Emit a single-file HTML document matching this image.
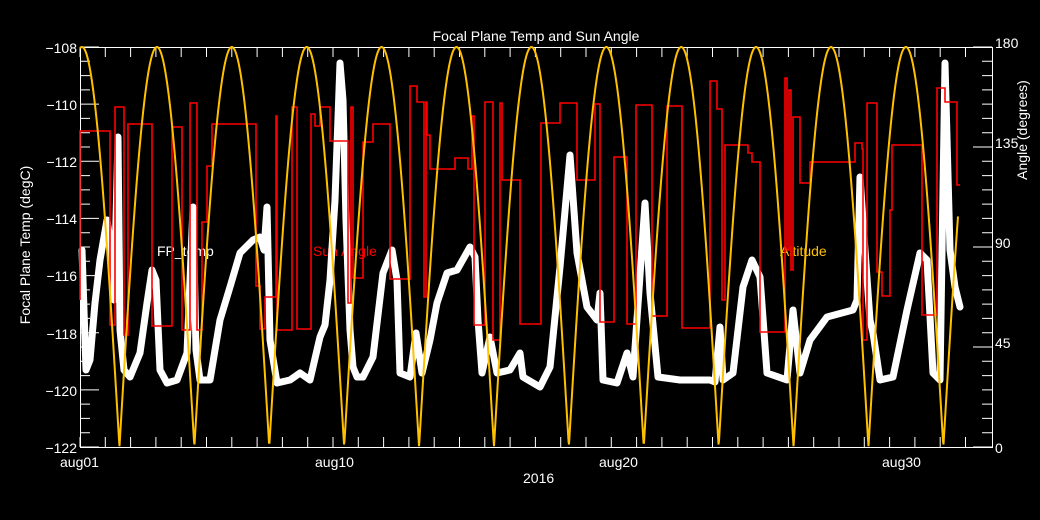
<!DOCTYPE html>
<html><head><meta charset="utf-8"><style>
html,body{margin:0;padding:0;background:#000;width:1040px;height:520px;overflow:hidden}
svg text{font-family:"Liberation Sans",sans-serif;font-size:14px}
</style></head><body>
<svg id="s" width="1040" height="520" viewBox="0 0 1040 520" xmlns="http://www.w3.org/2000/svg">
<rect width="1040" height="520" fill="#000"/>
<text x="536" y="41" fill="#fff" text-anchor="middle" font-size="15">Focal Plane Temp and Sun Angle</text>
<g fill="#fff" text-anchor="end">
<text x="77" y="53">−108</text><text x="77" y="110">−110</text><text x="77" y="167">−112</text>
<text x="77" y="224">−114</text><text x="77" y="281">−116</text><text x="77" y="339">−118</text>
<text x="77" y="396">−120</text><text x="77" y="453">−122</text>
</g>
<g fill="#fff">
<text x="995" y="48">180</text><text x="995" y="148">135</text><text x="995" y="248">90</text>
<text x="995" y="348">45</text><text x="995" y="453">0</text>
<text x="60" y="467">aug01</text><text x="315" y="467">aug10</text><text x="599" y="467">aug20</text><text x="882" y="467">aug30</text>
<text x="523" y="483">2016</text>
<text transform="translate(30,245) rotate(-90)" text-anchor="middle">Focal Plane Temp (degC)</text>
<text transform="translate(1027,130) rotate(-90)" text-anchor="middle">Angle (degrees)</text>
<text x="157" y="256">FP_temp</text>
</g>
<text x="313" y="256" fill="#ff0000">Sun Angle</text>
<text x="780" y="256" fill="#ffc000">Altitude</text>
<g id="ax" stroke="#fff" stroke-width="1" fill="none"><rect x="80.5" y="47.5" width="912" height="400"/></g>
<polyline fill="none" stroke="#fff" stroke-width="7" stroke-linejoin="round" stroke-linecap="round" points="82,250 86,370 90,360 95,303 100,260 107,220 110,240 114,300 118,137 120,330 124,370 130,377 140,353 147,303 152,270 156,280 160,370 167,383 177,380 187,353 193,207 196,350 200,380 210,380 220,320 230,287 240,253 253,240 260,237 264,250 267,207 270,340 277,383 290,380 300,373 310,380 320,337 325,325 330,280 335,200 340,63 343,100 346,220 350,330 353,367 357,377 363,377 373,357 383,273 392,250 397,280 400,373 410,377 416,333 422,373 430,340 437,303 447,273 457,270 470,247 475,257 478,320 482,373 490,337 497,373 510,370 520,353 523,377 540,387 550,367 560,267 570,155 577,253 587,307 597,320 600,293 603,380 617,383 627,353 633,377 645,203 650,293 658,377 680,380 710,380 715,382 720,327 723,380 733,373 743,287 752,260 760,277 767,373 787,380 793,310 800,373 810,340 827,317 853,310 857,300 860,177 865,250 870,320 873,333 880,380 893,377 907,310 920,253 927,260 933,373 940,380 945,63 950,250 955,287 960,307"/>
<path fill="none" stroke="#ff0000" stroke-width="1.6" d="M80 300 V131 H110 V325 H115 V107 H124 V335 H128 V124 H152 V326 H172 V127 H182 V330 H190 V103 H197 V330 H202 V222 H207 V166 H212 V124 H256 V286 H260 V329 H265 V297 H276 V116 H277 V330 H292 V107 H297 V329 H311 V114 H315 V126 H320 V107 H330 V141 H348 V303 H351 V107 H353 V278 H363 V142 H373 V124 H390 V279 H410 V86 H417 V102 H424 V297 H426 V102 H427 V135 H430 V169 H455 V158 H468 V169 H472 V116 H474 V325 H485 V102 H493 V340 H500 V103 H502 V180 H520 V324 H541 V123 H560 V103 H577 V180 H595 V104 H600 V322 H614 V157 H627 V324 H636 V105 H652 V316 H667 V106 H682 V328 H710 V81 H717 V109 H722 V300 H725 V145 H748 V153 H752 V162 H760 V332 H785 V78 H787 V250 H789 V90 H791 V270 H793 V117 H800 V183 H810 V162 H855 V143 H862 V149 H863 V340 H867 V103 H877 V272 H882 V296 H890 V210 H892 V145 H922 V315 H937 V88 H945 V102 H957 V185 H960"/>
<polyline id="alt" fill="none" stroke="#ffc000" stroke-width="2" points=""/>
</svg>
<script>
(function(){
var p=[];
for(var x=80;x<=958;x+=0.5){var a=180*Math.abs(Math.cos(Math.PI*(x-82)/74.9));p.push(x+","+(447-a/180*400).toFixed(1));}
document.getElementById("alt").setAttribute("points",p.join(" "));
var g=document.getElementById("ax"),d="";
for(var i=0;i<=35;i++){var x=80+i*25.3;if(x>992)break;d+="M"+x+" 447v-10M"+x+" 47v10";}
for(var j=0;j<=28;j++){var y=47+j*14.286,L=(j%4==0)?19:10,R=(j%7==0)?19:10;d+="M80 "+y+"h"+L+"M992 "+y+"h-"+R;}
var pa=document.createElementNS("http://www.w3.org/2000/svg","path");pa.setAttribute("d",d);g.appendChild(pa);
})();
</script>
</body></html>
